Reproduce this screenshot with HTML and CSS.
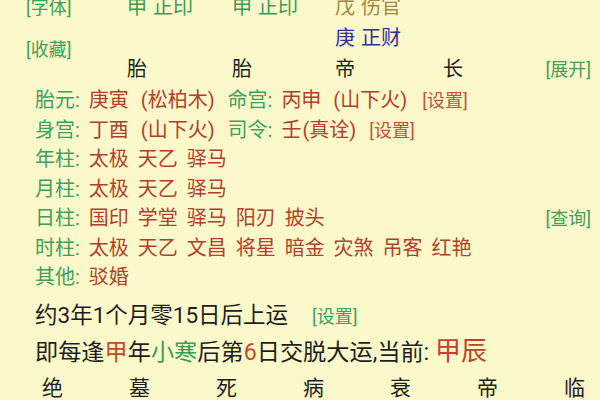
FILE: index.html
```html
<!DOCTYPE html>
<html lang="zh-CN">
<head>
<meta charset="utf-8">
<link rel="stylesheet" href="styles.css">
</head>
<body>
<div class="page">
  <div class="top">
    <div class="side">
      <div class="link">[字体]</div>
      <div class="link second">[收藏]</div>
    </div>
    <div class="grid">
      <div class="g c1 r1 green">申 正印</div>
      <div class="g c2 r1 green">申 正印</div>
      <div class="g c3 r1 olive">戊 伤官</div>
      <div class="g c3 r2 blue">庚 正财</div>
      <div class="g c1 r3">胎</div>
      <div class="g c2 r3">胎</div>
      <div class="g c3 r3">帝</div>
      <div class="g c4 r3">长</div>
      <div class="g c5 r3 link end">[展开]</div>
    </div>
  </div>
  <div class="rows">
    <div class="row"><span><span class="lab">胎元:</span> <span class="val">庚寅 <span class="par">(松柏木)</span></span> <span class="lab">命宫:</span> <span class="val">丙申 <span class="par">(山下火)</span></span> <span class="set">[设置]</span></span></div>
    <div class="row"><span><span class="lab">身宫:</span> <span class="val">丁酉 <span class="par">(山下火)</span></span> <span class="lab">司令:</span> <span class="val">壬<span class="par2">(真诠)</span></span> <span class="set">[设置]</span></span></div>
    <div class="row"><span><span class="lab">年柱:</span> <span class="val">太极 天乙 驿马</span></span></div>
    <div class="row"><span><span class="lab">月柱:</span> <span class="val">太极 天乙 驿马</span></span></div>
    <div class="row"><span><span class="lab">日柱:</span> <span class="val">国印 学堂 驿马 阳刃 披头</span></span><span class="link">[查询]</span></div>
    <div class="row"><span><span class="lab">时柱:</span> <span class="val">太极 天乙 文昌 将星 暗金 灾煞 吊客 红艳</span></span></div>
    <div class="row"><span><span class="lab">其他:</span> <span class="val">驳婚</span></span></div>
  </div>
  <div class="luck first-luck">约3年1个月零15日后上运<span class="link gap">[设置]</span></div>
  <div class="luck second-luck">即每逢<span class="red">甲</span>年<span class="green">小寒</span>后第<span class="red">6</span>日交脱大运,当前: <span class="cur">甲辰</span></div>
  <div class="stages">
    <span>绝</span><span>墓</span><span>死</span><span>病</span><span>衰</span><span>帝</span><span>临</span>
  </div>
</div>
</body>
</html>
```

FILE: styles.css
```css
html, body {
  margin: 0;
  padding: 0;
  background: #fbf8c9;
}
body {
  width: 600px;
  height: 400px;
  overflow: hidden;
  font-family: Roboto, "Noto Sans CJK SC", sans-serif;
  color: #1e1e1e;
}
.page {
  display: flex;
  flex-direction: column;
}
.top {
  display: flex;
  margin-top: -8px;
  padding-left: 26px;
  padding-right: 9px;
}
.side {
  width: 101px;
  display: flex;
  flex-direction: column;
}
.side .link {
  line-height: 31px;
}
.side .second {
  margin-top: 11px;
}
.link {
  color: #3f9f5e;
  font-size: 18px;
}
.grid {
  flex: 1;
  display: grid;
  grid-template-columns: 105px 103px 108px 1fr;
  grid-template-rows: 31px 31px 31px;
  font-size: 20px;
  line-height: 31px;
  word-spacing: 1px;
}
.c1 { grid-column: 1; }
.c2 { grid-column: 2; }
.c3 { grid-column: 3; }
.c4 { grid-column: 4; }
.c5 { grid-column: 4; justify-self: end; }
.r1 { grid-row: 1; }
.r2 { grid-row: 2; }
.r3 { grid-row: 3; }
.grid .link { font-size: 18px; }
.green { color: #3b9a55; }
.olive { color: #a08a3e; }
.blue { color: #2e2e9e; }
.rows {
  margin-top: 1px;
  padding-left: 35px;
  padding-right: 9px;
  font-size: 20px;
  line-height: 29.5px;
  word-spacing: 4px;
}
.row {
  display: flex;
  justify-content: space-between;
  align-items: baseline;
}
.lab { color: #3f9f5e; }
.val { color: #b23f2b; }
.par { margin: 0 4px 0 3px; }
.par2 { margin: 0 2px 0 1px; }
.set { color: #c5503c; font-size: 18px; word-spacing: 0; margin-left: 2px; }
.row .link { word-spacing: 0; }
.luck {
  padding-left: 35px;
  font-size: 22.5px;
  line-height: 34px;
  color: #1e1e1e;
}
.first-luck { margin-top: 5px; }
.second-luck { font-size: 23.2px; }
.gap { margin-left: 24px; font-size: 18px; }
.red { color: #c5482f; }
.cur { color: #c2402c; font-size: 26px; }
.stages {
  margin-top: 2px;
  padding-left: 42px;
  display: grid;
  grid-template-columns: repeat(7, 87px);
  font-size: 21px;
  line-height: 34px;
}
```
